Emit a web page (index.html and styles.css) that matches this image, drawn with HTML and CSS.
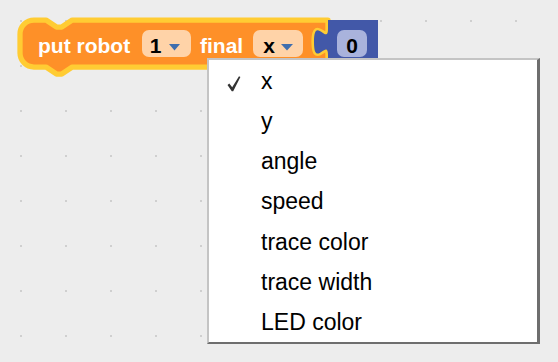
FILE: index.html
```
<!DOCTYPE html>
<html>
<head>
<meta charset="utf-8">
<link rel="stylesheet" href="styles.css">
</head>
<body>
<div class="workspace">
  <svg class="canvas" width="558" height="362" viewBox="0 0 558 362">
    <defs>
      <pattern id="grid" x="0" y="0" width="45" height="45" patternUnits="userSpaceOnUse">
        <rect x="20" y="20" width="2" height="2" fill="#cfcfcf"/>
      </pattern>
    </defs>
    <rect width="558" height="362" fill="url(#grid)"/>
    <g class="block">
      <path class="orange" d="M20,34 A14,14 0 0 1 34,20 H46 l10.5,7 5.25,0 10.5,-7 H328 v8.75 c0,17.5 -14,-14 -14,13.125 s14,-4.375 14,13.125 V67 H72.25 l-10.5,7 -5.25,0 -10.5,-7 H34 A14,14 0 0 1 20,53 Z"/>
      <text class="label" x="38" y="53">put robot</text>
      <rect class="ofield" x="142" y="30" width="49" height="27" rx="7"/>
      <text class="ftext" x="155.5" y="53">1</text>
      <polygon class="arrow" points="169,44 180,44 174.5,50.5"/>
      <text class="label" x="200" y="53">final</text>
      <rect class="ofield" x="253" y="30" width="50" height="27" rx="7"/>
      <text class="ftext" x="269" y="53">x</text>
      <polygon class="arrow" points="281,44 293,44 287,50.5"/>
    </g>
    <g class="block">
      <path class="blue" d="M328,20 H378 V64 H328 V55 c0,-17.5 -14,14 -14,-13.125 s14,4.375 14,-13.125 Z"/>
      <rect class="bfield" x="337" y="30" width="30" height="27" rx="7"/>
      <text class="ftext" x="352" y="53">0</text>
    </g>
  </svg>
  <div class="menu">
    <div class="item">
      <svg class="check" width="16" height="16" viewBox="0 0 16 16"><path d="M0.5,9 L2.3,7.6 L5.2,11.2 L12,0.2 L13.4,0.9 L6.2,15.2 L4.8,15.2 Z"/></svg>
      x
    </div>
    <div class="item">y</div>
    <div class="item">angle</div>
    <div class="item">speed</div>
    <div class="item">trace color</div>
    <div class="item">trace width</div>
    <div class="item">LED color</div>
  </div>
</div>
</body>
</html>
```
FILE: styles.css
```
html, body {
  margin: 0;
  padding: 0;
}
body {
  background: #ededed;
  font-family: "Liberation Sans", Arial, sans-serif;
}
.workspace {
  position: relative;
  width: 558px;
  height: 362px;
  overflow: hidden;
  background: #ededed;
}
.canvas {
  position: absolute;
  left: 0;
  top: 0;
  display: block;
}
.orange {
  fill: #fe9028;
  stroke: #ffcc33;
  stroke-width: 5.25;
  stroke-linejoin: round;
}
.blue {
  fill: #4258a8;
}
.label {
  fill: #ffffff;
  font-family: "Liberation Sans", Arial, sans-serif;
  font-weight: bold;
  font-size: 21px;
}
.ftext {
  fill: #000000;
  font-family: "Liberation Sans", Arial, sans-serif;
  font-weight: bold;
  font-size: 21px;
  text-anchor: middle;
}
.ofield {
  fill: #ffd3a8;
}
.bfield {
  fill: #a9b3dc;
}
.arrow {
  fill: #3f6eae;
}
.menu {
  position: absolute;
  left: 207px;
  top: 58px;
  width: 328px;
  background: #ffffff;
  border-style: solid;
  border-width: 2px 3px 2px 2px;
  border-color: #c4c4c4 #6e6e6e #6e6e6e #c4c4c4;
  padding: 1px 0 0 0;
}
.item {
  position: relative;
  height: 40.17px;
  line-height: 40.17px;
  padding-left: 52px;
  font-size: 23px;
  color: #000000;
  white-space: nowrap;
}
.check {
  position: absolute;
  left: 18px;
  top: 15px;
  fill: #333333;
}
```
